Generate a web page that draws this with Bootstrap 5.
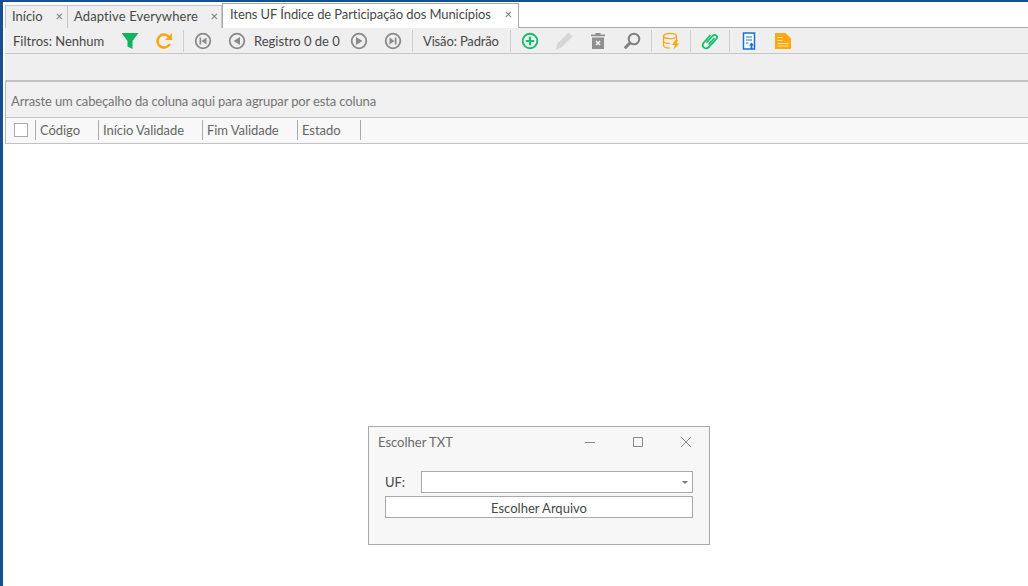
<!DOCTYPE html>
<html lang="pt-BR">
<head>
  <meta charset="UTF-8">
  <title>Itens UF Índice de Participação dos Municípios</title>
  <link href="https://cdn.jsdelivr.net/npm/bootstrap@5.3.0/dist/css/bootstrap.min.css" rel="stylesheet">
  <style>
    html, body { height: 100%; overflow: hidden; }
    body { background: #fff; color: #484848; font-family: Lato, "Liberation Sans", sans-serif; font-size: 13px; line-height: 16px; font-variant-ligatures: none; }
    .app-frame { height: 586px; border-top: 2px solid #17508f; border-left: 3px solid #17508f; padding-left: 2px; position: relative; }
    .tab-strip { height: 26px; padding-top: 2px; background: #fff; border-bottom: 1px solid #a9a9a9; }
    .tab-item { height: 23px; margin-top: 1px; padding: 2px 3px 0 6px; background: #efefef; border: 1px solid #c6c6c6; border-bottom: 0; border-left-width: 0; white-space: nowrap; }
    .tab-item:first-child { border-left-width: 1px; padding-right: 4px; }
    .tab-item.current { height: 25px; margin-top: -1px; margin-bottom: -1px; background: #fff; border: 1px solid #a9a9a9; border-bottom: 0; padding: 2px 6px 0 7px; z-index: 1; }
    .tab-x { color: #777; }
    .tool-strip { height: 26px; background: #efefef; border-bottom: 1px solid #c6c6c6; }
    .tool-sep { width: 1px; height: 22px; background: #cfcfcf; }
    .tool-icon { display: block; width: 18px; height: 18px; flex: none; }
    .empty-band { height: 28px; background: #efefef; border-bottom: 2px solid #c2c2c2; }
    .group-panel { height: 36px; background: #f0f0f0; border-bottom: 1px solid #c6c6c6; border-left: 1px solid #b5b5b5; padding: 11px 0 0 5px; color: #757575; letter-spacing: -.14px; }
    .grid-head { height: 26px; background: #f8f8f8; border-bottom: 1px solid #c2c2c2; border-left: 1px solid #b5b5b5; }
    .grid-check { width: 14px; height: 14px; margin: 5px 0 0 8px; background: #fff; border: 1px solid #a9a9a9; }
    .grid-col { height: 20px; margin-top: 2px; padding: 2px 0 0 4px; border-left: 1px solid #a9a9a9; color: #666; letter-spacing: -.06px; }
    .grid-col.last { border-right: 1px solid #a9a9a9; }
    .txt-dialog { position: absolute; left: 365px; top: 424px; width: 342px; height: 119px; background: #f7f7f7; border: 1px solid #a9a9a9; }
    .txt-title { color: #6a6a6a; height: 31px; padding: 7px 0 0 9px; }
    .win-btn { position: absolute; top: 9px; width: 12px; height: 12px; }
    .uf-input { height: 22px; background: #fff; border: 1px solid #a9a9a9; position: relative; }
    .uf-caret { position: absolute; right: 4px; top: 9px; border: 3px solid transparent; border-top: 3px solid #777; border-bottom: 0; }
    .pick-btn { height: 22px; margin-top: 3px; background: #fff; border: 1px solid #a9a9a9; text-align: center; line-height: 22px; }
    .txt-wide { letter-spacing: .12px; }
    .txt-tight { letter-spacing: -.09px; }
  </style>
</head>
<body>
<div class="app-frame">

  <!-- tabs -->
  <div class="tab-strip d-flex">
    <div class="tab-item d-flex justify-content-between" style="width:63px"><span>Início</span><span class="tab-x">×</span></div>
    <div class="tab-item d-flex justify-content-between" style="width:154px"><span class="txt-wide">Adaptive Everywhere</span><span class="tab-x">×</span></div>
    <div class="tab-item current d-flex justify-content-between" style="width:297px"><span class="txt-tight">Itens UF Índice de Participação dos Municípios</span><span class="tab-x">×</span></div>
  </div>

  <!-- toolbar -->
  <div class="tool-strip d-flex align-items-center text-nowrap">
    <span style="margin-left:8px;width:108px">Filtros: Nenhum</span>
    <svg class="tool-icon" viewBox="0 0 18 18"><path d="M.5 1h17l-6 8v8l-5-2.500V9z" fill="#12b35a"/></svg>
    <svg class="tool-icon" style="margin-left:16px" viewBox="0 0 18 18"><path d="M14.800 12a6.500 6.500 0 1 1-.6-6.800" fill="none" stroke="#f9a60f" stroke-width="2.500"/><path d="M17 1v7h-7z" fill="#f9a60f"/></svg>
    <div class="tool-sep" style="margin-left:10px"></div>
    <svg class="tool-icon" style="margin-left:10px" viewBox="0 0 18 18"><circle cx="9" cy="9" r="7.300" fill="none" stroke="#8a8a8a" stroke-width="1.800"/><path d="M5.500 5.500h1.700v7H5.500zM12.500 5.500v7L7.500 9z" fill="#8a8a8a"/></svg>
    <svg class="tool-icon" style="margin-left:16px" viewBox="0 0 18 18"><circle cx="9" cy="9" r="7.300" fill="none" stroke="#8a8a8a" stroke-width="1.800"/><path d="M12 5v8L5.500 9z" fill="#8a8a8a"/></svg>
    <span style="margin-left:8px;width:96px">Registro 0 de 0</span>
    <svg class="tool-icon" viewBox="0 0 18 18"><circle cx="9" cy="9" r="7.300" fill="none" stroke="#8a8a8a" stroke-width="1.800"/><path d="M6 5v8l6.500-4z" fill="#8a8a8a"/></svg>
    <svg class="tool-icon" style="margin-left:16px" viewBox="0 0 18 18"><circle cx="9" cy="9" r="7.300" fill="none" stroke="#8a8a8a" stroke-width="1.800"/><path d="M12.500 5.500h-1.700v7h1.700zM5.500 5.500v7l5-3.500z" fill="#8a8a8a"/></svg>
    <div class="tool-sep" style="margin-left:10px"></div>
    <span style="margin-left:10px;width:87px;letter-spacing:-.15px">Visão: Padrão</span>
    <div class="tool-sep"></div>
    <svg class="tool-icon" style="margin-left:10px" viewBox="0 0 18 18"><circle cx="9" cy="9" r="7.300" fill="none" stroke="#12c06e" stroke-width="1.900"/><path d="M9 4.800v8.400M4.800 9h8.400" stroke="#12c06e" stroke-width="2.200"/></svg>
    <svg class="tool-icon" style="margin-left:16px" viewBox="0 0 18 18"><path d="M13.500.5l4 4L6.500 15.500l-6 2 2-6z" fill="#d6d6d6"/></svg>
    <svg class="tool-icon" style="margin-left:16px" viewBox="0 0 18 18"><path d="M2 2.500h14v1.800H2zM6.500 1h5v1.500h-5z" fill="#8f8f8f"/><path d="M3 5.500h12V17H3z" fill="#8f8f8f"/><path d="M7 9l4 4M11 9l-4 4" stroke="#eee" stroke-width="1.700"/></svg>
    <svg class="tool-icon" style="margin-left:16px" viewBox="0 0 18 18"><circle cx="11" cy="7" r="5.300" fill="none" stroke="#808080" stroke-width="2"/><path d="M7.200 10.800L1.800 16.200" stroke="#808080" stroke-width="3"/></svg>
    <div class="tool-sep" style="margin-left:10px"></div>
    <svg class="tool-icon" style="margin-left:10px" viewBox="0 0 18 18"><g fill="none" stroke="#f9a60f" stroke-width="1.200"><ellipse cx="8" cy="4" rx="6.500" ry="2.700"/><path d="M1.500 4v9.500c0 1.500 3 2.500 6.500 2.500M14.500 4v4M1.500 9c0 1.500 3 2.500 6.500 2.500"/></g><path d="M13.500 8l-3.500 5h3L11.500 17.500l6-6h-3L16 8z" fill="#f9a60f"/></svg>
    <div class="tool-sep" style="margin-left:10px"></div>
    <svg class="tool-icon" style="margin-left:10px" viewBox="0 0 18 18"><path d="M5.500 10.500l6-6.500c2.500-2.500 6-.2 3.800 3l-7.500 8c-3 3-8 0-5.300-4L9.500 3M7.500 12.500l6-6.500" fill="none" stroke="#12c06e" stroke-width="1.800"/></svg>
    <div class="tool-sep" style="margin-left:10px"></div>
    <svg class="tool-icon" style="margin-left:10px" viewBox="0 0 18 18"><path d="M3.500 1h11v16h-11z" fill="#fff" stroke="#1472d8" stroke-width="1.500"/><path d="M6 5h6M6 8h6M6 11h2.500" stroke="#1472d8" stroke-width="1.200"/><path d="M11.500 10.500l2.600 3h-1.700v3.500h-1.800v-3.500H8.900z" fill="#1472d8"/></svg>
    <svg class="tool-icon" style="margin-left:16px" viewBox="0 0 18 18"><path d="M1 1h10.500L17 6.500V17H1z" fill="#fca80e"/><path d="M3.500 5.500h5M3.500 8.500h5M3.500 11.500h11M3.500 14h11" stroke="#ffe2ab" stroke-width="1.200"/></svg>
  </div>

  <div class="empty-band"></div>

  <div class="group-panel">Arraste um cabeçalho da coluna aqui para agrupar por esta coluna</div>

  <!-- grid header -->
  <div class="grid-head d-flex">
    <div class="grid-check"></div>
    <div class="grid-col" style="margin-left:7px;width:63px">Código</div>
    <div class="grid-col" style="width:104px">Início Validade</div>
    <div class="grid-col" style="width:95px">Fim Validade</div>
    <div class="grid-col last" style="width:64px">Estado</div>
  </div>

  <!-- floating window -->
  <div class="txt-dialog">
    <div class="txt-title">Escolher TXT</div>
    <svg class="win-btn" style="left:215px" viewBox="0 0 12 12"><path d="M1 6.500h10" stroke="#888"/></svg>
    <svg class="win-btn" style="left:263px" viewBox="0 0 12 12"><path d="M1.500 1.500h9v9h-9z" fill="none" stroke="#888"/></svg>
    <svg class="win-btn" style="left:311px" viewBox="0 0 12 12"><path d="M1 1l10 10M11 1L1 11" stroke="#888"/></svg>
    <div style="padding:13px 16px 0">
      <div class="d-flex align-items-center">
        <span style="width:36px">UF:</span>
        <div class="uf-input flex-grow-1"><span class="uf-caret"></span></div>
      </div>
      <div class="pick-btn">Escolher Arquivo</div>
    </div>
  </div>
</div>
<script src="https://cdn.jsdelivr.net/npm/bootstrap@5.3.0/dist/js/bootstrap.bundle.min.js"></script>
</body>
</html>
